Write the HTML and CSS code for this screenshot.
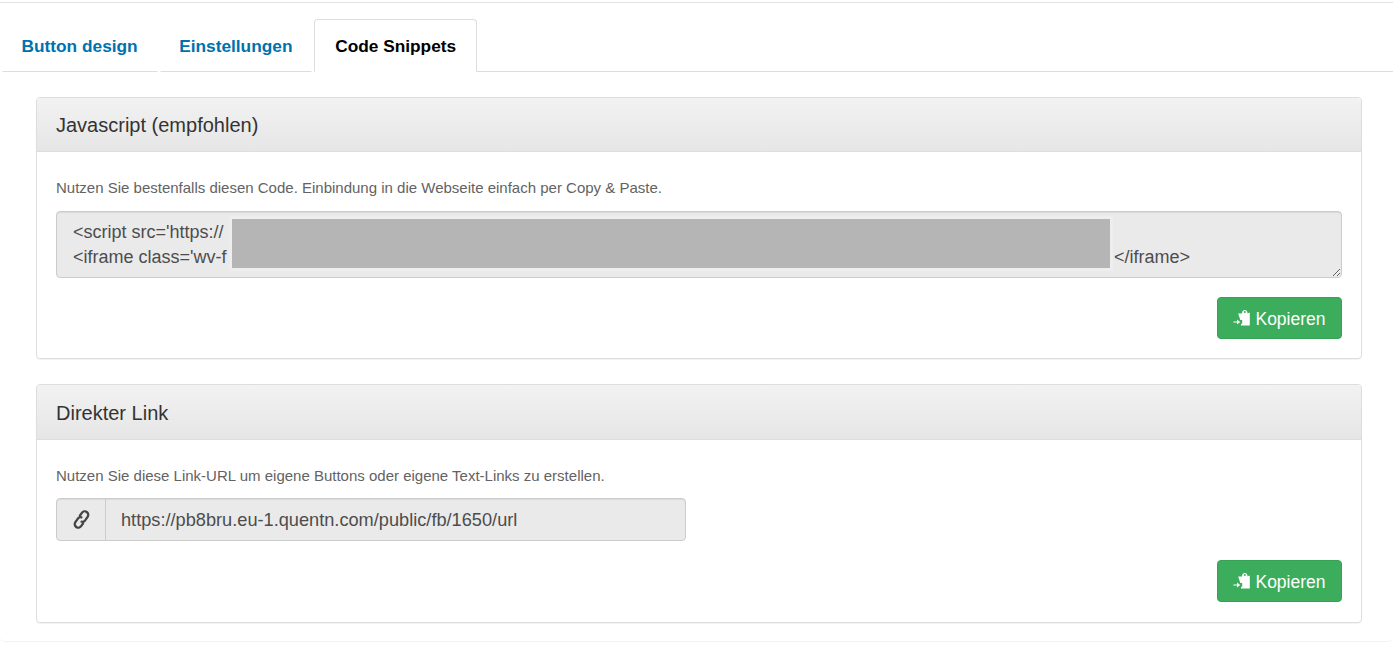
FILE: index.html
```html
<!DOCTYPE html>
<html lang="de">
<head>
<meta charset="utf-8">
<title>Code Snippets</title>
<link rel="stylesheet" href="styles.css">
</head>
<body>
<div class="page">
  <ul class="tabs">
    <li class="tab"><a href="#">Button design</a></li>
    <li class="tab"><a href="#">Einstellungen</a></li>
    <li class="tab active"><a href="#">Code Snippets</a></li>
  </ul>
  <div class="content">
    <section class="panel script-panel">
      <h2 class="panel-head">Javascript (empfohlen)</h2>
      <div class="panel-body">
        <p class="hint">Nutzen Sie bestenfalls diesen Code. Einbindung in die Webseite einfach per Copy &amp; Paste.</p>
        <div class="code">
          <span class="code-text">&lt;script src='https://</span>
          <span class="redact"></span>
          <span class="code-text">&lt;iframe class='wv-f</span>
          <span class="code-end">&lt;/iframe&gt;</span>
        </div>
        <div class="actions">
          <button class="btn" type="button">
            <svg class="btn-icon" viewBox="0 0 18 18" aria-hidden="true"><path class="fill" d="M5.200 4.600H9C9.100 2.200 10 .9 11.800 .9s2.700 1.300 2.800 3.700L16.800 3.400V16.500H8V14.800H9.200V11H7.300z"/><circle class="hole" cx="11.800" cy="3" r="1"/><path class="fill" d="M.4 12.500H4V10.500L7.200 13 4 15.500V13.500H.4z"/></svg>
            <span>Kopieren</span>
          </button>
        </div>
      </div>
    </section>
    <section class="panel link-panel">
      <h2 class="panel-head">Direkter Link</h2>
      <div class="panel-body">
        <p class="hint">Nutzen Sie diese Link-URL um eigene Buttons oder eigene Text-Links zu erstellen.</p>
        <div class="input-group">
          <span class="addon">
            <svg class="link-icon" viewBox="0 0 24 24" aria-hidden="true"><g transform="rotate(-55 12 12)"><path d="M9.500 16H5.500a4 4 0 0 1 0-8h5a4 4 0 0 1 3.500 2.500"/><path d="M14.500 8h4a4 4 0 0 1 0 8h-5a4 4 0 0 1-3.500-2.500"/></g></svg>
          </span>
          <span class="input">https://pb8bru.eu-1.quentn.com/public/fb/1650/url</span>
        </div>
        <div class="actions">
          <button class="btn" type="button">
            <svg class="btn-icon" viewBox="0 0 18 18" aria-hidden="true"><path class="fill" d="M5.200 4.600H9C9.100 2.200 10 .9 11.800 .9s2.700 1.300 2.800 3.700L16.800 3.400V16.500H8V14.800H9.200V11H7.300z"/><circle class="hole" cx="11.800" cy="3" r="1"/><path class="fill" d="M.4 12.500H4V10.500L7.200 13 4 15.500V13.500H.4z"/></svg>
            <span>Kopieren</span>
          </button>
        </div>
      </div>
    </section>
  </div>
</div>
</body>
</html>
```
FILE: styles.css
```css
* { box-sizing: border-box; }
html, body { margin: 0; padding: 0; background: #fff; }
body {
  font-family: "Liberation Sans", Arial, sans-serif;
  color: #333;
  height: 655px;
  overflow: hidden;
}
.page {
  margin-top: 2px;
  height: 640px;
  border-top: 1px solid #e2e2e2;
  border-bottom: 1px solid #f2f2f2;
  border-radius: 0 0 5px 5px;
}
.tabs {
  list-style: none;
  margin: 16px 0 0;
  padding: 0 0 0 2px;
  display: flex;
  gap: 2px;
  height: 53px;
}
.tabs::after {
  content: "";
  flex: 1;
  margin-left: -2px;
  border-bottom: 1px solid #ddd;
}
.tab {
  height: 53px;
  border: 1px solid transparent;
  border-bottom-color: #ddd;
  border-radius: 4px 4px 0 0;
}
.tab a {
  display: block;
  padding: 16px 19px 0 18.500px;
  font-size: 17.300px;
  line-height: 20px;
  font-weight: bold;
  color: #0071ad;
  text-decoration: none;
}
.tab.active {
  background: #fff;
  border-color: #ddd #ddd #fff;
}
.tab.active a {
  padding: 16px 19.700px 0;
  color: #000;
}
.content { padding: 25px 31px 0 36px; }
.panel {
  border: 1px solid #ddd;
  border-radius: 4px;
  box-shadow: 0 1px 1px rgba(0,0,0,.05);
}
.link-panel { margin-top: 25px; }
.panel-head {
  margin: 0;
  height: 54px;
  padding: 15px 19px 0;
  font-size: 20px;
  line-height: 24px;
  font-weight: normal;
  color: #333;
  background: linear-gradient(#f2f2f2, #e6e6e6);
  border-bottom: 1px solid #ddd;
  border-radius: 3px 3px 0 0;
}
.link-panel .panel-head { height: 55px; padding-top: 16px; }
.panel-body { padding: 26px 19px 19px; }
.link-panel .panel-body { padding-bottom: 20px; }
.hint {
  margin: 0 0 14px;
  font-size: 15px;
  line-height: 19px;
  color: #636363;
}
.link-panel .hint { margin-bottom: 13px; }
.code {
  display: grid;
  grid-template-columns: 159px 878px auto;
  grid-template-rows: 25px 24px;
  height: 67px;
  padding: 7px 16px;
  background: #eaeaea;
  border: 1px solid #ccc;
  border-radius: 4px;
  box-shadow: inset 0 1px 1px rgba(0,0,0,.075);
  overflow: hidden;
  resize: vertical;
  font-size: 18px;
  line-height: 27px;
  color: #4d4d4d;
}
.code-text { grid-column: 1; white-space: nowrap; }
.redact {
  grid-column: 2;
  grid-row: 1 / 3;
  background: #b5b5b5;
  box-shadow: 0 0 0 3px #eeeeee;
}
.code-end { grid-column: 3; grid-row: 2; margin-left: 4px; white-space: nowrap; }
.actions { display: flex; justify-content: flex-end; margin-top: 19px; }
.btn {
  display: flex;
  align-items: center;
  justify-content: center;
  gap: 4px;
  width: 125px;
  height: 42px;
  padding: 2px 0 0;
  background: #3cad5c;
  border: 1px solid #36a253;
  border-radius: 4px;
  color: #fff;
  font-family: inherit;
  font-size: 17.500px;
  cursor: pointer;
}
.btn-icon { width: 18px; height: 18px; margin-top: -2px; }
.fill { fill: #fff; }
.hole { fill: #3cad5c; }
.input-group {
  display: flex;
  width: 630px;
  height: 43px;
  border: 1px solid #ccc;
  border-radius: 4px;
  background: #eaeaea;
  box-shadow: inset 0 1px 1px rgba(0,0,0,.075);
}
.addon {
  display: flex;
  align-items: center;
  justify-content: center;
  width: 49px;
  border-right: 1px solid #ccc;
}
.link-icon {
  width: 21px;
  height: 21px;
  fill: none;
  stroke: #444;
  stroke-width: 2.600;
  stroke-linecap: round;
}
.input {
  padding-left: 15px;
  font-size: 18.200px;
  line-height: 43px;
  color: #4d4d4d;
}
```
